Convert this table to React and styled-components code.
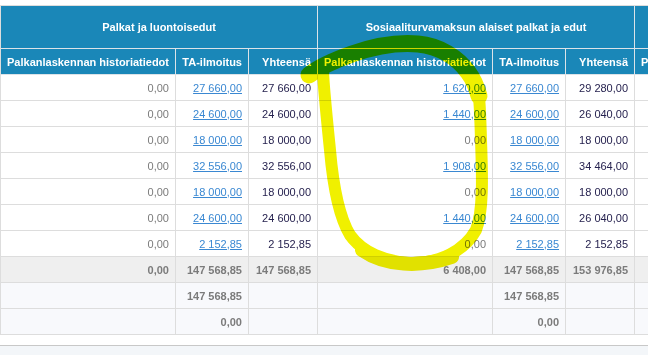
import React from "react"
import styled, { createGlobalStyle } from "styled-components"

const GlobalStyle = createGlobalStyle`
    body{
        margin: 0;
        background: #FFFFFF;
        font-family: "Liberation Sans", Arial, sans-serif;
    }
`

const widths = [175, 73, 69, 175, 73, 69, 175]

const rivit = [
    ["0,00", "27 660,00", "27 660,00", "1 620,00", "27 660,00", "29 280,00"],
    ["0,00", "24 600,00", "24 600,00", "1 440,00", "24 600,00", "26 040,00"],
    ["0,00", "18 000,00", "18 000,00", "0,00", "18 000,00", "18 000,00"],
    ["0,00", "32 556,00", "32 556,00", "1 908,00", "32 556,00", "34 464,00"],
    ["0,00", "18 000,00", "18 000,00", "0,00", "18 000,00", "18 000,00"],
    ["0,00", "24 600,00", "24 600,00", "1 440,00", "24 600,00", "26 040,00"],
    ["0,00", "2 152,85", "2 152,85", "0,00", "2 152,85", "2 152,85"],
]

function tyyppi(index, arvo) {
    if (index === 1 || index === 4) return "link"
    if (index === 3) return arvo === "0,00" ? "plain" : "link"
    if (index === 2 || index === 5) return "sum"
    return "plain"
}

export default function App() {
    return (
        <Sivu>
            <GlobalStyle />
            <Taulu>
                <colgroup>
                    {widths.map((w, i) => <Sarake key={i} $w={w} />)}
                </colgroup>
                <thead>
                    <Rivi $h={43}>
                        <Otsikko colSpan={3} $center>Palkat ja luontoisedut</Otsikko>
                        <Otsikko colSpan={3} $center>Sosiaaliturvamaksun alaiset palkat ja edut</Otsikko>
                        <Otsikko $center>Muut</Otsikko>
                    </Rivi>
                    <Rivi $h={26}>
                        <Otsikko>Palkanlaskennan historiatiedot</Otsikko>
                        <Otsikko>TA-ilmoitus</Otsikko>
                        <Otsikko>Yhteensä</Otsikko>
                        <Otsikko>Palkanlaskennan historiatiedot</Otsikko>
                        <Otsikko>TA-ilmoitus</Otsikko>
                        <Otsikko>Yhteensä</Otsikko>
                        <Otsikko>Palkanlaskennan historiatiedot</Otsikko>
                    </Rivi>
                </thead>
                <tbody>
                    {rivit.map((rivi, r) =>
                        <Rivi key={r} $h={26}>
                            {rivi.map((arvo, i) => {
                                const t = tyyppi(i, arvo)
                                return (
                                    <Solu key={i} $tyyppi={t}>
                                        {t === "link" ? <Linkki href="#">{arvo}</Linkki> : arvo}
                                    </Solu>
                                )
                            })}
                            <Solu />
                        </Rivi>
                    )}
                    <Rivi $h={26} $tausta="#EFEFEF">
                        <Solu $tyyppi="bold">0,00</Solu>
                        <Solu $tyyppi="bold">147 568,85</Solu>
                        <Solu $tyyppi="bold">147 568,85</Solu>
                        <Solu $tyyppi="bold">6 408,00</Solu>
                        <Solu $tyyppi="bold">147 568,85</Solu>
                        <Solu $tyyppi="bold">153 976,85</Solu>
                        <Solu />
                    </Rivi>
                    <Rivi $h={26} $tausta="#F8F9FC">
                        <Solu />
                        <Solu $tyyppi="bold">147 568,85</Solu>
                        <Solu />
                        <Solu />
                        <Solu $tyyppi="bold">147 568,85</Solu>
                        <Solu />
                        <Solu />
                    </Rivi>
                    <Rivi $h={26} $tausta="#F8F9FC">
                        <Solu />
                        <Solu $tyyppi="bold">0,00</Solu>
                        <Solu />
                        <Solu />
                        <Solu $tyyppi="bold">0,00</Solu>
                        <Solu />
                        <Solu />
                    </Rivi>
                </tbody>
            </Taulu>
            <Alapalkki />
            <Korostus viewBox="0 0 648 355" width="648" height="355">
                <path
                    d="M 323 72 C 324 92, 327 120, 330 150 C 333 185, 338 215, 350 235 C 362 252, 385 262, 410 263 C 440 264, 465 250, 476 230 C 484 210, 482 170, 481 140 C 480 110, 480 95, 476 85"
                    fill="none" stroke="#F0F000" strokeWidth="12" strokeLinecap="round" strokeLinejoin="round"
                />
                <path
                    d="M 309 75 C 318 68, 335 60, 352 54 C 372 47, 395 42, 418 44 C 440 46, 458 58, 468 72 C 474 80, 477 88, 479 96"
                    fill="none" stroke="#F0F000" strokeWidth="17" strokeLinecap="round"
                />
                <path
                    d="M 362 250 C 385 266, 420 268, 452 257"
                    fill="none" stroke="#F0F000" strokeWidth="14" strokeLinecap="round"
                />
            </Korostus>
        </Sivu>
    )
}

const Sivu = styled.div`
    position: relative;
    width: 648px;
    height: 355px;
    overflow: hidden;
    padding-top: 5px;
    box-sizing: border-box;
`

const Taulu = styled.table`
    table-layout: fixed;
    width: 810px;
    border-collapse: separate;
    border-spacing: 0;
    border-top: 1px solid #DDDDDD;
    border-left: 1px solid #DDDDDD;
    font-size: 11px;
`

const Sarake = styled.col`
    width: ${props => props.$w}px;
`

const Rivi = styled.tr`
    height: ${props => props.$h}px;
    background-color: ${props => props.$tausta || "#FFFFFF"};
`

const Otsikko = styled.th`
    background-color: #1A87B8;
    color: #FFFFFF;
    font-weight: 700;
    font-size: 11px;
    text-align: ${props => props.$center ? "center" : "right"};
    padding: 0 6px;
    border-right: 1px solid #DCE3E8;
    border-bottom: 1px solid #DCE3E8;
    white-space: nowrap;
    overflow: hidden;
    box-sizing: border-box;
`

const Solu = styled.td`
    text-align: right;
    padding: 0 6px;
    border-right: 1px solid #DDDDDD;
    border-bottom: 1px solid #DDDDDD;
    white-space: nowrap;
    box-sizing: border-box;
    font-weight: ${props => props.$tyyppi === "bold" ? 700 : 400};
    color: ${props => props.$tyyppi === "sum" ? "#26224F" : "#7B7B7B"};
`

const Linkki = styled.a`
    color: #3A88D2;
    text-decoration: underline;
`

const Alapalkki = styled.div`
    margin-top: 10px;
    height: 30px;
    border-top: 1px solid #C8C8C8;
    background-color: #F3F6F9;
`

const Korostus = styled.svg`
    position: absolute;
    top: 0;
    left: 0;
    pointer-events: none;
    mix-blend-mode: multiply;
`
